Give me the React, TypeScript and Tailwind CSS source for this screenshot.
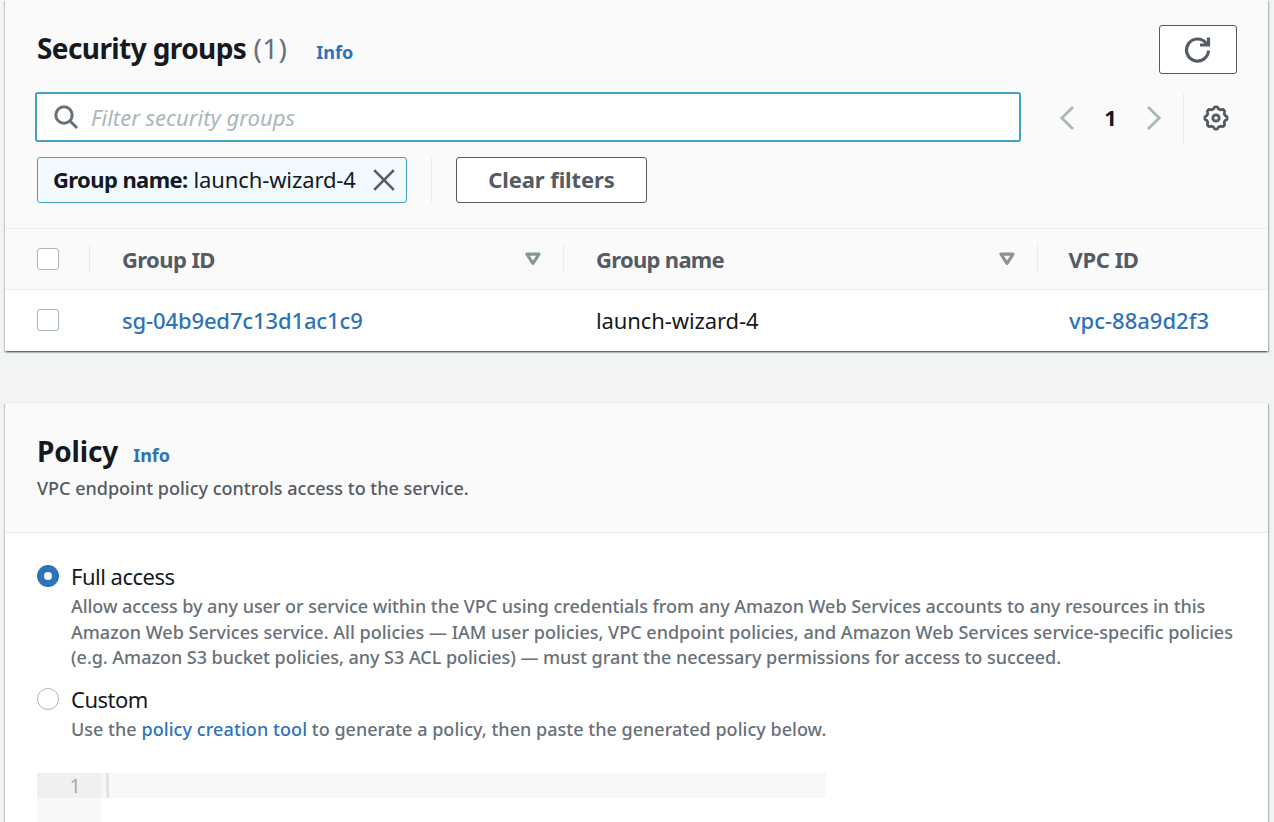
import type { ReactNode } from "react";

const card =
  "w-[1263px] border-t border-[#eaeded] bg-white shadow-[0_1.5px_1.5px_0_rgba(0,28,36,0.4),1.5px_1.5px_1.5px_0_rgba(0,28,36,0.2),-1.5px_1.5px_1.5px_0_rgba(0,28,36,0.2)]";

// Eight rounded teeth around a centre of 13,13.
const gearOutline = Array.from({ length: 96 }, (_, i) => {
  const angle = (i / 96) * Math.PI * 2;
  const radius = 10.200 + 0.95 * Math.tanh(2 * Math.cos(8 * angle));
  return `${(13 + radius * Math.cos(angle)).toFixed(2)},${(13 + radius * Math.sin(angle)).toFixed(2)}`;
}).join(" ");

function SearchIcon() {
  return (
    <svg width="26" height="26" viewBox="0 0 26 26" fill="none" stroke="#687078" strokeWidth="3">
      <circle cx="11" cy="11" r="8.2" />
      <path d="M16.8 16.8 24 24" />
    </svg>
  );
}

function RefreshIcon() {
  return (
    <svg width="28" height="28" viewBox="0 0 28 28" fill="none" stroke="#545b64" strokeWidth="3.2">
      <path d="M24.500 14.500A11 11 0 1 1 22 7" />
      <path d="M24.500 1.500V9h-8.500" />
      <path d="M24.500 4.500V9H19z" fill="#545b64" stroke="none" />
    </svg>
  );
}

function Chevron({ right }: { right?: boolean }) {
  return (
    <svg width="16" height="24" viewBox="0 0 16 24" fill="none" stroke="#aab7b8" strokeWidth="2.8">
      <path d={right ? "M2 1l11.2 11L2 23" : "M14 1L2.8 12 14 23"} />
    </svg>
  );
}

function GearIcon() {
  return (
    <svg width="26" height="26" viewBox="0 0 26 26" fill="none" stroke="#545b64" strokeWidth="2.8" strokeLinejoin="round">
      <circle cx="13" cy="13" r="3.2" />
      <polygon points={gearOutline} />
    </svg>
  );
}

function CloseIcon() {
  return (
    <svg className="-mt-px" width="22" height="22" viewBox="0 0 22 22" fill="none" stroke="#545b64" strokeWidth="2.6">
      <path d="M1.200 1.200l19.600 19.600M20.800 1.200L1.200 20.800" />
    </svg>
  );
}

function SortIcon() {
  return (
    <svg width="16" height="14" viewBox="0 0 16 14" fill="none" stroke="#879596" strokeWidth="3.2" strokeLinejoin="round">
      <path d="M2 2.200h12L8 11.500z" />
    </svg>
  );
}

function Checkbox() {
  return <span className="block size-[22px] shrink-0 rounded-[3px] border-[1.5px] border-[#aab7b8] bg-white" />;
}

function ColumnHead({ label, sortable }: { label: ReactNode; sortable?: boolean }) {
  return (
    <div className="flex h-[30px] items-center justify-between border-l border-[#eaeded] pr-[22px] pl-8 font-bold text-[#545b64]">
      {label}
      {sortable && <SortIcon />}
    </div>
  );
}

function SecurityGroups() {
  return (
    <section className={`${card} h-[352px] -mt-px`}>
      <div className="h-[229px] border-b border-[#eaeded] bg-[#fafafa] pr-[31px] pl-[30px]">
        <div className="flex h-[92px] justify-between pt-[25px] pl-[2px]">
          <div className="flex h-[49px] items-baseline">
            <h2 className="text-[28px] leading-[46px] font-bold whitespace-nowrap">
              <span className="tracking-[-0.6px]">Security groups</span>{" "}
              <span className="font-normal tracking-[0.3px] text-[#687078]">(1)</span>
            </h2>
            <a className="ml-[29px] text-[18px] font-bold text-[#2e73b8]">Info</a>
          </div>
          <button className="flex h-[49px] w-[78px] items-center justify-center rounded-[3px] border border-[#545b64] bg-white">
            <RefreshIcon />
          </button>
        </div>
        <div className="flex h-[50px] items-center">
          <div className="flex h-[50px] w-[986px] shrink-0 items-center rounded-[3px] border-x-[2.5px] border-y-2 border-[#44a0c8] bg-white pl-4">
            <SearchIcon />
            <span className="ml-3 text-[22px] text-[#aab7b8] italic">Filter security groups</span>
          </div>
          <div className="mt-px ml-[38px] flex items-center">
            <Chevron />
            <span className="w-[71px] text-center text-[22px] font-bold">1</span>
            <Chevron right />
          </div>
          <div className="mt-[2px] ml-[21px] flex h-[50px] items-center border-l border-[#eaeded] pl-[19px]">
            <GearIcon />
          </div>
        </div>
        <div className="mt-[15px] flex h-[46px] pl-[2px]">
          <div className="flex w-[370px] items-center justify-between rounded-[3px] border border-[#44a0c8] bg-[#f1faff] pr-[11px] pl-[15px] text-[22px]">
            <span className="-mt-[2px] whitespace-nowrap">
              <b className="tracking-[-0.6px]">Group name:</b> <span className="tracking-[-0.1px]">launch-wizard-4</span>
            </span>
            <CloseIcon />
          </div>
          <div className="ml-6 w-[25px] border-l border-[#eaeded]" />
          <button className="w-[191px] rounded-[3px] border border-[#545b64] bg-white pb-[2px] text-[22px] font-bold tracking-[-0.1px] text-[#545b64]">
            Clear filters
          </button>
        </div>
      </div>
      <div className="grid h-[61px] grid-cols-[84px_474px_473.500px_1fr] items-center border-b border-[#eaeded] bg-[#fafafa] text-[22px]">
        <div className="pl-8"><Checkbox /></div>
        <ColumnHead label={<span className="tracking-[-0.6px]">Group ID</span>} sortable />
        <ColumnHead label={<span className="tracking-[-0.7px]">Group name</span>} sortable />
        <ColumnHead label={<span className="-ml-px tracking-[-0.4px]">VPC ID</span>} />
      </div>
      <div className="grid h-[60px] grid-cols-[84px_474px_473px_1fr] items-center text-[22px]">
        <div className="pl-8"><Checkbox /></div>
        <a className="pl-[33px] font-medium tracking-[-0.13px] text-[#2e73b8]">sg-04b9ed7c13d1ac1c9</a>
        <span className="pl-[33px] tracking-[-0.1px]">launch-wizard-4</span>
        <a className="pl-[33px] font-medium text-[#2e73b8]">vpc-88a9d2f3</a>
      </div>
    </section>
  );
}

function PolicyOption({ checked, label, children }: { checked?: boolean; label: string; children: ReactNode }) {
  return (
    <div className="flex">
      {checked ? (
        <span className="mt-[2px] flex size-[22px] shrink-0 rounded-full border-[7px] border-[#2e73b8] bg-white" />
      ) : (
        <span className="mt-[2px] size-[22px] shrink-0 rounded-full border-[1.5px] border-[#aab7b8] bg-white" />
      )}
      <div className="ml-3">
        <div className="h-[31px] text-[22px] leading-[27px] tracking-[-0.5px]">{label}</div>
        <div className="text-[18px] leading-[25.500px] font-medium whitespace-nowrap text-[#687078]">{children}</div>
      </div>
    </div>
  );
}

function Policy() {
  return (
    <section className={`${card} mt-[51px] h-[500px]`}>
      <div className="h-[130px] border-b border-[#eaeded] bg-[#fafafa] px-8 pt-[28px]">
        <div className="flex h-[43px] items-baseline">
          <h2 className="text-[28px] leading-[41px] font-bold tracking-[-0.15px]">Policy</h2>
          <a className="ml-[15px] text-[18px] font-bold text-[#2e73b8]">Info</a>
        </div>
        <p className="text-[18px] leading-[28px] font-medium text-[#545b64]">VPC endpoint policy controls access to the service.</p>
      </div>
      <div className="px-8 pt-[30px]">
        <PolicyOption checked label="Full access">
          <div className="tracking-[-0.047px]">Allow access by any user or service within the VPC using credentials from any Amazon Web Services accounts to any resources in this</div>
          <div className="tracking-[0.01px]">Amazon Web Services service. All policies — IAM user policies, VPC endpoint policies, and Amazon Web Services service-specific policies</div>
          <div className="tracking-[-0.035px]">(e.g. Amazon S3 bucket policies, any S3 ACL policies) — must grant the necessary permissions for access to succeed.</div>
        </PolicyOption>
        <div className="h-[15px]" />
        <PolicyOption label="Custom">
          <div className="tracking-[0.02px]">
            Use the <a className="tracking-[0.08px] text-[#2e73b8]">policy creation tool</a> to generate a policy, then paste the generated policy below.
          </div>
        </PolicyOption>
        <div className="mt-[31px] flex h-[60px] w-[789px]">
          <div className="w-[65px] bg-[#f8f8f8]">
            <div className="h-[25px] bg-[#f0f0f0] pr-[21px] text-right text-[20px] leading-[26px] text-[#aaaaaa]">1</div>
          </div>
          <div className="h-[25px] flex-1 bg-[#f7f7f7] pl-1">
            <div className="h-[25px] w-[3px] bg-[#e2e2e2]" />
          </div>
        </div>
      </div>
    </section>
  );
}

export default function App() {
  return (
    <main className="h-[822px] w-[1274px] overflow-hidden bg-[#f2f3f3] pl-[5px] font-['Noto_Sans',sans-serif] text-[#16191f]">
      <SecurityGroups />
      <Policy />
    </main>
  );
}
